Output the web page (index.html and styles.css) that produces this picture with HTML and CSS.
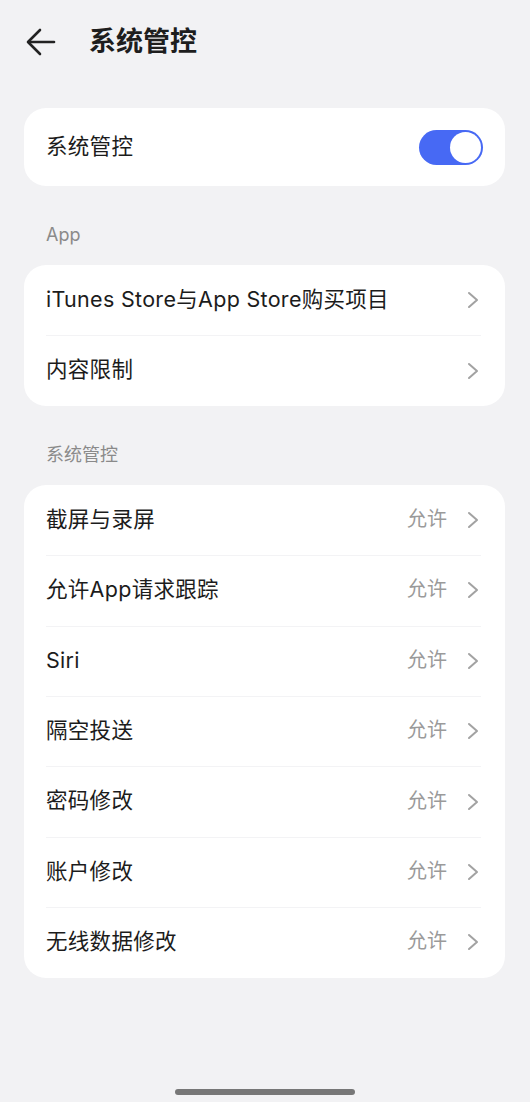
FILE: index.html
```html
<!DOCTYPE html>
<html lang="zh-CN">
<head>
<meta charset="utf-8">
<title>系统管控</title>
<link rel="stylesheet" href="styles.css">
</head>
<body>
<div class="page">
  <header class="header">
    <svg class="back" width="30" height="28" viewBox="0 0 30 28" fill="none" stroke="#222" stroke-width="2.6" stroke-linecap="round" stroke-linejoin="round">
      <path d="M28 14H3"/>
      <path d="M14 2L2 14l12 12"/>
    </svg>
    <h1 class="title">系统管控</h1>
  </header>

  <main class="content">
    <section class="card">
      <div class="row row-toggle">
        <span class="row-label">系统管控</span>
        <span class="switch"><span class="knob"></span></span>
      </div>
    </section>

    <div class="section-label">App</div>
    <section class="card">
      <div class="row">
        <span class="row-label">iTunes Store与App Store购买项目</span>
        <span class="row-end"><svg class="chev" width="14" height="18" viewBox="0 0 14 18" fill="none" stroke="#a2a2a2" stroke-width="2" stroke-linecap="round" stroke-linejoin="round"><path d="M3 2l8 7-8 7"/></svg></span>
      </div>
      <div class="row">
        <span class="row-label">内容限制</span>
        <span class="row-end"><svg class="chev" width="14" height="18" viewBox="0 0 14 18" fill="none" stroke="#a2a2a2" stroke-width="2" stroke-linecap="round" stroke-linejoin="round"><path d="M3 2l8 7-8 7"/></svg></span>
      </div>
    </section>

    <div class="section-label">系统管控</div>
    <section class="card">
      <div class="row"><span class="row-label">截屏与录屏</span><span class="row-end"><span class="value">允许</span><svg class="chev" width="14" height="18" viewBox="0 0 14 18" fill="none" stroke="#a2a2a2" stroke-width="2" stroke-linecap="round" stroke-linejoin="round"><path d="M3 2l8 7-8 7"/></svg></span></div>
      <div class="row"><span class="row-label">允许App请求跟踪</span><span class="row-end"><span class="value">允许</span><svg class="chev" width="14" height="18" viewBox="0 0 14 18" fill="none" stroke="#a2a2a2" stroke-width="2" stroke-linecap="round" stroke-linejoin="round"><path d="M3 2l8 7-8 7"/></svg></span></div>
      <div class="row"><span class="row-label">Siri</span><span class="row-end"><span class="value">允许</span><svg class="chev" width="14" height="18" viewBox="0 0 14 18" fill="none" stroke="#a2a2a2" stroke-width="2" stroke-linecap="round" stroke-linejoin="round"><path d="M3 2l8 7-8 7"/></svg></span></div>
      <div class="row"><span class="row-label">隔空投送</span><span class="row-end"><span class="value">允许</span><svg class="chev" width="14" height="18" viewBox="0 0 14 18" fill="none" stroke="#a2a2a2" stroke-width="2" stroke-linecap="round" stroke-linejoin="round"><path d="M3 2l8 7-8 7"/></svg></span></div>
      <div class="row"><span class="row-label">密码修改</span><span class="row-end"><span class="value">允许</span><svg class="chev" width="14" height="18" viewBox="0 0 14 18" fill="none" stroke="#a2a2a2" stroke-width="2" stroke-linecap="round" stroke-linejoin="round"><path d="M3 2l8 7-8 7"/></svg></span></div>
      <div class="row"><span class="row-label">账户修改</span><span class="row-end"><span class="value">允许</span><svg class="chev" width="14" height="18" viewBox="0 0 14 18" fill="none" stroke="#a2a2a2" stroke-width="2" stroke-linecap="round" stroke-linejoin="round"><path d="M3 2l8 7-8 7"/></svg></span></div>
      <div class="row"><span class="row-label">无线数据修改</span><span class="row-end"><span class="value">允许</span><svg class="chev" width="14" height="18" viewBox="0 0 14 18" fill="none" stroke="#a2a2a2" stroke-width="2" stroke-linecap="round" stroke-linejoin="round"><path d="M3 2l8 7-8 7"/></svg></span></div>
    </section>
  </main>

  <div class="home-area"><span class="home-bar"></span></div>
</div>
</body>
</html>
```

FILE: styles.css
```css
* { box-sizing: border-box; }
html, body {
  margin: 0;
  padding: 0;
  background: #f2f2f4;
}
body {
  font-family: Inter, "Noto Sans CJK SC", "Noto Sans", sans-serif;
  color: #1c1c1c;
}
.page {
  width: 530px;
  height: 1102px;
  display: flex;
  flex-direction: column;
}
.header {
  height: 84px;
  display: flex;
  align-items: center;
  padding-left: 26px;
}
.back { display: block; }
.title {
  margin: -2px 0 0 33px;
  font-size: 27px;
  font-weight: 700;
  line-height: 1;
  color: #1e1e1e;
}
.content {
  padding: 24px 25px 0 24px;
  flex: 1;
}
.card {
  background: #fff;
  border-radius: 22px;
  overflow: hidden;
}
.row {
  height: 70.4px;
  display: flex;
  align-items: center;
  justify-content: space-between;
  padding: 0 25px 0 22px;
  position: relative;
}
.row + .row::before {
  content: "";
  position: absolute;
  top: 0;
  left: 22px;
  right: 24px;
  height: 1px;
  background: #f3f3f5;
}
.row-toggle {
  height: 78px;
  padding-right: 22px;
}
.row-label {
  font-size: 21.5px;
  line-height: 1;
  margin-top: -1px;
  letter-spacing: 0.3px;
}
.row-end {
  display: flex;
  align-items: center;
  gap: 19px;
}
.value {
  font-size: 20px;
  color: #9a9a9a;
  line-height: 1;
  margin-top: -2px;
}
.chev { display: block; }
.switch {
  width: 64px;
  height: 35px;
  border-radius: 18px;
  background: #4769f4;
  display: flex;
  align-items: center;
  justify-content: flex-end;
  padding-right: 2px;
}
.knob {
  width: 31px;
  height: 31px;
  border-radius: 50%;
  background: #fff;
}
.section-label {
  padding: 37px 0 18px 22px;
  height: 79px;
  font-size: 18px;
  line-height: 24px;
  color: #8a8a8a;
}
.home-area {
  height: 22px;
  padding-top: 9px;
  display: flex;
  justify-content: center;
  align-items: flex-start;
}
.home-bar {
  width: 180px;
  height: 6px;
  border-radius: 3px;
  background: #777;
}
```
